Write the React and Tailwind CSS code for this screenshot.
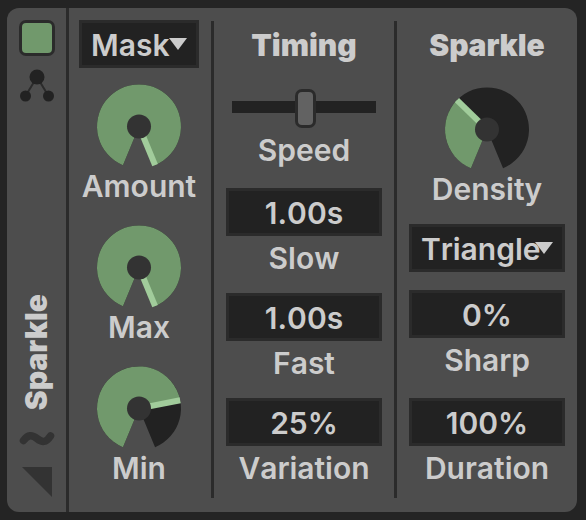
import { clsx } from "clsx";

// the dial sweeps 315 degrees, leaving a gap at the bottom
const SWEEP = 315;
const START = -SWEEP / 2;

const polar = (angle, radius) => {
  const rad = (angle * Math.PI) / 180;
  return [42 + Math.sin(rad) * radius, 42 - Math.cos(rad) * radius];
};

const wedge = (from, to) => {
  const [x1, y1] = polar(from, 42);
  const [x2, y2] = polar(to, 42);
  return `M42 42L${x1} ${y1}A42 42 0 ${to - from > 180 ? 1 : 0} 1 ${x2} ${y2}Z`;
};

function Label({ children, className }) {
  return (
    <span className={clsx("block h-9 text-center leading-9 whitespace-nowrap", className)}>
      {children}
    </span>
  );
}

function Title({ children }) {
  return <h2 className="mt-[7px] h-9 text-center font-[870] leading-9">{children}</h2>;
}

function Knob({ label, value, className }) {
  const angle = START + SWEEP * value;
  const [x, y] = polar(angle, 42);
  return (
    <div className={clsx("flex flex-col items-center", className)}>
      <svg width="84" height="84" viewBox="0 0 84 84" className="block overflow-visible">
        <g transform="translate(0 0.4)">
          <path d={wedge(START, START + SWEEP)} fill="#222222" />
          <path d={wedge(START, angle)} fill="#71996c" />
          <line x1="42" y1="42" x2={x} y2={y} stroke="#a1cc9b" strokeWidth="6" />
          <circle cx="42" cy="42" r="12" fill="#333333" />
        </g>
      </svg>
      <Label>{label}</Label>
    </div>
  );
}

function Select({ value, className }) {
  return (
    <button
      className={clsx(
        "relative flex h-12 w-full items-center border-3 border-[#2b2b2b] bg-[#222222] pt-0.5 pl-[9px]",
        className
      )}
    >
      {value}
      <svg width="18" height="12" viewBox="0 0 18 12" className="absolute top-[15px] right-[9px]">
        <path d="M0 0H18L9 12Z" fill="#cccccc" />
      </svg>
    </button>
  );
}

function NumberField({ label, value, className }) {
  return (
    <div className={className}>
      <div className="flex h-12 items-center justify-center border-3 border-[#2b2b2b] bg-[#222222] pt-0.5">
        {value}
      </div>
      <Label className="mt-1">{label}</Label>
    </div>
  );
}

function Slider({ label }) {
  return (
    <div className="mt-[26px]">
      <div className="relative mx-1.5 h-[39px] pt-3">
        <div className="h-3 w-full bg-[#222222]" />
        <div className="absolute top-0 left-[63px] h-[39px] w-[21px] rounded-[7px] border-3 border-[#2b2b2b] bg-[#626262]" />
      </div>
      <Label className="mt-1">{label}</Label>
    </div>
  );
}

function Divider() {
  return <div className="mx-3 mt-[13px] h-[477px] w-[3px] shrink-0 bg-[#2b2b2b]" />;
}

function Sidebar() {
  return (
    <aside className="flex w-[62px] shrink-0 flex-col items-center border-r-3 border-[#2b2b2b] pt-3 pl-px">
      <div className="size-9 rounded-[7px] border-3 border-[#2b2b2b] bg-[#71996c]" />
      <svg width="36" height="34" viewBox="0 0 36 34" className="mt-3">
        <path d="M18 9L6.500 28M18 9L29.500 28" stroke="#2b2b2b" strokeWidth="2" />
        <circle cx="18" cy="9" r="7.5" fill="#222222" />
        <circle cx="6.5" cy="28" r="5.5" fill="#222222" />
        <circle cx="29.5" cy="28" r="5.5" fill="#222222" />
      </svg>
      <h1 className="mt-auto mr-[3px] mb-[19px] w-9 rotate-180 leading-9 font-[870] [writing-mode:vertical-rl]">
        Sparkle
      </h1>
      <svg width="36" height="18" viewBox="0 0 36 18">
        <path
          d="M4.500 11.500C9 5.500 13 5.500 18 9.500S27 14 31.500 7"
          fill="none"
          stroke="#333333"
          strokeWidth="7.5"
          strokeLinecap="round"
        />
      </svg>
      <svg width="30" height="30" viewBox="0 0 30 30" className="mt-5 mb-[15px]">
        <path d="M0 0H30V30Z" fill="#333333" />
      </svg>
    </aside>
  );
}

function App() {
  return (
    <main className="h-[520px] w-[586px] bg-[#242424] pt-2 pl-[7px] font-['Inter',sans-serif] text-[30px] font-semibold text-[#cccccc] [font-kerning:none]">
      <section className="flex h-[504px] w-[570px] overflow-hidden rounded-xl bg-[#4d4d4d]">
        <Sidebar />
        <div className="flex pl-2.5">
          <div className="w-[120px] pt-3">
            <Select value="Mask" />
            <Knob label="Amount" value={1} className="mt-4" />
            <Knob label="Max" value={1} className="mt-[21px]" />
            <Knob label="Min" value={0.75} className="mt-[21px]" />
          </div>
          <Divider />
          <div className="w-[156px] pt-3">
            <Title>Timing</Title>
            <Slider label="Speed" />
            <NumberField label="Slow" value="1.00s" className="mt-5" />
            <NumberField label="Fast" value="1.00s" className="mt-[17px]" />
            <NumberField label="Variation" value="25%" className="mt-[17px]" />
          </div>
          <Divider />
          <div className="w-[156px] pt-3">
            <Title>Sparkle</Title>
            <Knob label="Density" value={0.355} className="mt-6" />
            <Select value="Triangle" className="mt-[17px]" />
            <NumberField label="Sharp" value="0%" className="mt-[18px]" />
            <NumberField label="Duration" value="100%" className="mt-5" />
          </div>
        </div>
      </section>
    </main>
  );
}

export default App;
